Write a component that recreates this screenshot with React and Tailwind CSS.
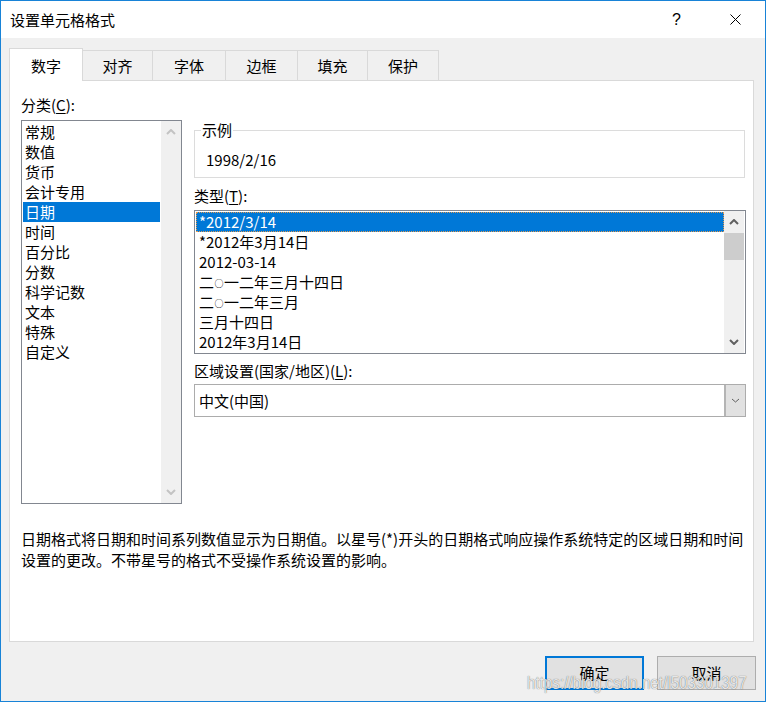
import React from 'react';

const Chevron = ({ dir = 'up', color = '#606060', width = 2, w = 10, h = 6 }) => (
  <svg width={w} height={h} viewBox={`0 0 ${w} ${h}`}>
    <path
      d={dir === 'up' ? `M1 ${h - 1} L${w / 2} 1 L${w - 1} ${h - 1}` : `M1 1 L${w / 2} ${h - 1} L${w - 1} 1`}
      fill="none"
      stroke={color}
      strokeWidth={width}
    />
  </svg>
);

const tabs = [
  { label: '数字', w: 'w-[74px]' },
  { label: '对齐', w: 'w-[70px]' },
  { label: '字体', w: 'w-[73px]' },
  { label: '边框', w: 'w-[72px]' },
  { label: '填充', w: 'w-[70px]' },
  { label: '保护', w: 'w-[71px]' },
];

const categories = ['常规', '数值', '货币', '会计专用', '日期', '时间', '百分比', '分数', '科学记数', '文本', '特殊', '自定义'];

// the small circle in 二○一二 is drawn smaller than a full-width glyph
const Ling = () => <span className="inline-block w-[10px] text-center text-[9px] align-[1px]">○</span>;

const types = [
  '*2012/3/14',
  '*2012年3月14日',
  '2012-03-14',
  <>二<Ling />一二年三月十四日</>,
  <>二<Ling />一二年三月</>,
  '三月十四日',
  '2012年3月14日',
];

const App = () => {
  return (
    <div className="relative w-[766px] h-[702px] border border-[#1883d7] bg-[#f0f0f0] flex flex-col font-['Noto_Sans_CJK_SC',sans-serif] text-[15px] text-black overflow-hidden">
      {/* title bar */}
      <div className="h-[37px] bg-white flex items-center pl-[9px] pr-[24px] shrink-0">
        <span className="leading-[20px]">设置单元格格式</span>
        <span className="ml-auto leading-[20px] font-['Liberation_Sans',sans-serif] text-[16px]">?</span>
        <svg className="ml-[49px]" width="11" height="11" viewBox="0 0 11 11">
          <path d="M0.5 0.5 L10.5 10.5 M10.5 0.5 L0.5 10.5" stroke="#000" strokeWidth="1" />
        </svg>
      </div>

      <div className="flex-1 pl-[8px] pr-[11px]">
        {/* tabs */}
        <div className="mt-[10px] h-[32px] flex items-end">
          {tabs.map((t, i) =>
            i === 0 ? (
              <div
                key={t.label}
                className={`${t.w} h-[33px] -mb-[1px] relative z-10 bg-white border-l border-t border-r border-[#d9d9d9] flex items-center justify-center pt-[1px] leading-[20px]`}
              >
                {t.label}
              </div>
            ) : (
              <div
                key={t.label}
                className={`${t.w} h-[30px] border-t border-r border-[#d9d9d9] flex items-center justify-center pt-[1px] leading-[20px]`}
              >
                {t.label}
              </div>
            )
          )}
        </div>

        {/* panel */}
        <div className="h-[562px] bg-white border border-[#d9d9d9] flex flex-col">
          <div className="flex pl-[11px]">
            {/* category column */}
            <div className="w-[161px]">
              <div className="mt-[14px] leading-[20px]">
                分类(<span className="underline underline-offset-2">C</span>):
              </div>
              <div className="mt-[5px] h-[384px] border border-[#828790] flex">
                <div className="flex-1 pt-[1px] px-[1px]">
                  {categories.map((c) => (
                    <div
                      key={c}
                      className={`h-[20px] leading-[20px] pl-[2px] ${c === '日期' ? 'bg-[#0078d7] text-white' : ''}`}
                    >
                      {c}
                    </div>
                  ))}
                </div>
                <div className="w-[20px] bg-[#f0f0f0] flex flex-col justify-between items-center py-[8px]">
                  <Chevron dir="up" color="#c3c3c3" />
                  <Chevron dir="down" color="#c3c3c3" />
                </div>
              </div>
            </div>

            {/* right column */}
            <div className="ml-[12px] w-[552px]">
              <div className="relative mt-[49px] w-[551px] h-[48px] border border-[#dcdcdc]">
                <span className="absolute -top-[11px] left-[6px] bg-white px-[1px] leading-[20px]">示例</span>
                <div className="pl-[11px] pt-[19px] leading-[20px]">1998/2/16</div>
              </div>

              <div className="mt-[8px] leading-[20px]">
                类型(<span className="underline underline-offset-2">T</span>):
              </div>
              <div className="mt-[4px] h-[144px] border border-[#828790] flex">
                <div className="flex-1 pt-[1px] pl-[1px]">
                  {types.map((t, i) => (
                    <div
                      key={i}
                      className={`h-[20px] leading-[18px] pl-[2px] border ${
                        i === 0 ? 'bg-[#0078d7] text-white border-dotted border-[#e39a4f]' : 'border-transparent'
                      }`}
                    >
                      {t}
                    </div>
                  ))}
                </div>
                <div className="w-[20px] mr-[1px] bg-[#f0f0f0] flex flex-col">
                  <div className="h-[22px] flex items-center justify-center">
                    <Chevron dir="up" color="#606060" />
                  </div>
                  <div className="h-[27px] bg-[#cdcdcd]" />
                  <div className="flex-1" />
                  <div className="h-[22px] flex items-center justify-center">
                    <Chevron dir="down" color="#606060" />
                  </div>
                </div>
              </div>

              <div className="mt-[7px] leading-[20px]">
                区域设置(国家/地区)(<span className="underline underline-offset-2">L</span>):
              </div>
              <div className="mt-[3px] h-[33px] border border-[#acacac] flex">
                <div className="flex-1 pl-[4px] flex items-center leading-[20px]">中文(中国)</div>
                <div className="w-[21px] bg-[#e1e1e1] border-l-2 border-[#b4b4b4] flex items-center justify-center">
                  <Chevron dir="down" color="#606060" width={1} w={9} h={5} />
                </div>
              </div>
            </div>
          </div>

          <div className="mt-[24px] pl-[11px] leading-[21px]">
            日期格式将日期和时间系列数值显示为日期值。以星号(*)开头的日期格式响应操作系统特定的区域日期和时间
            <br />
            设置的更改。不带星号的格式不受操作系统设置的影响。
          </div>
        </div>

        {/* buttons */}
        <div className="mt-[14px] -mr-[2px] flex justify-end gap-[13px]">
          <button className="w-[99px] h-[34px] bg-[#e1e1e1] border-2 border-[#0078d7] flex items-center justify-center leading-[20px]">
            确定
          </button>
          <button className="w-[99px] h-[34px] bg-[#e1e1e1] border border-[#adadad] flex items-center justify-center leading-[20px]">
            取消
          </button>
        </div>
      </div>

      {/* watermark */}
      <div className="absolute left-[526px] top-[670px] origin-left scale-x-[0.8] whitespace-nowrap font-['Liberation_Sans',sans-serif] text-[19px] leading-[24px] text-white/85 [text-shadow:0_0_1px_rgba(0,0,0,0.7)] pointer-events-none">
        https://blog.csdn.net/l503301397
      </div>
    </div>
  );
};

export default App;
